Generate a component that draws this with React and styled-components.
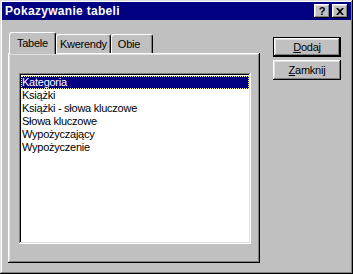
import React, { useState } from "react";
import styled, { createGlobalStyle } from "styled-components";

const GlobalStyle = createGlobalStyle`
  html, body {
    margin: 0;
    padding: 0;
    background: #c0c0c0;
  }
  * {
    box-sizing: border-box;
  }
`;

const Window = styled.div`
  width: 353px;
  height: 274px;
  background: #c0c0c0;
  padding: 2px;
  display: flex;
  flex-direction: column;
  font-family: "Liberation Sans", Arial, sans-serif;
  font-size: 11px;
  letter-spacing: -0.25px;
  color: #000;
  box-shadow: inset -1px -1px #000, inset 1px 1px #dfdfdf,
    inset -2px -2px #808080, inset 2px 2px #fff;
`;

const TitleBar = styled.div`
  height: 18px;
  background: #000080;
  display: flex;
  align-items: center;
  padding: 0 3px 0 3px;
`;

const Title = styled.span`
  flex: 1;
  color: #fff;
  font-weight: bold;
  font-size: 12px;
  letter-spacing: 0.3px;
`;

const TitleButton = styled.button`
  width: 16px;
  height: 14px;
  margin-left: ${(p) => (p.$gap ? "2px" : "0")};
  padding: 0;
  border: none;
  background: #c0c0c0;
  display: flex;
  align-items: center;
  justify-content: center;
  font-family: "Liberation Sans", Arial, sans-serif;
  font-weight: bold;
  font-size: 11px;
  line-height: 1;
  box-shadow: inset -1px -1px #000, inset 1px 1px #fff,
    inset -2px -2px #808080, inset 2px 2px #dfdfdf;
`;

const Body = styled.div`
  flex: 1;
  display: flex;
  padding: 12px 9px 9px 6px;
  gap: 13px;
`;

const TabColumn = styled.div`
  width: 252px;
  display: flex;
  flex-direction: column;
`;

const TabStrip = styled.div`
  display: flex;
  align-items: flex-end;
  height: 21px;
  padding-left: 1px;
  position: relative;
  z-index: 1;
`;

const Tab = styled.div`
  height: ${(p) => (p.$active ? "22px" : "19px")};
  margin-bottom: ${(p) => (p.$active ? "-1px" : "0")};
  padding: 0 ${(p) => p.$pad}px;
  padding-top: ${(p) => (p.$active ? "4px" : "3px")};
  background: #c0c0c0;
  display: flex;
  align-items: flex-start;
  border-top: 1px solid #fff;
  border-left: 1px solid #fff;
  border-right: 1px solid #000;
  border-radius: 3px 3px 0 0;
  box-shadow: inset -1px 0 #808080;
`;

const Panel = styled.div`
  flex: 1;
  background: #c0c0c0;
  padding: 20px 9px 19px 11px;
  display: flex;
  box-shadow: inset -1px -1px #000, inset 1px 1px #fff,
    inset -2px -2px #808080, inset 2px 2px #dfdfdf;
`;

const ListBox = styled.div`
  flex: 1;
  background: #fff;
  padding: 3px 2px 2px 2px;
  box-shadow: inset -1px -1px #fff, inset 1px 1px #808080,
    inset -2px -2px #dfdfdf, inset 2px 2px #000;
`;

const Item = styled.div`
  height: 13px;
  line-height: 12px;
  padding-left: 1px;
  white-space: nowrap;
  background: ${(p) => (p.$selected ? "#000080" : "transparent")};
  color: ${(p) => (p.$selected ? "#fff" : "#000")};
  outline: ${(p) => (p.$selected ? "1px dotted #ffff80" : "none")};
  outline-offset: -1px;
  cursor: default;
`;

const ButtonColumn = styled.div`
  display: flex;
  flex-direction: column;
  gap: 3px;
  padding-top: 5px;
  width: 68px;
`;

const Button = styled.button`
  height: 20px;
  width: 68px;
  padding: 0;
  background: #c0c0c0;
  border: ${(p) => (p.$default ? "1px solid #000" : "none")};
  font-family: "Liberation Sans", Arial, sans-serif;
  font-size: 11px;
  letter-spacing: -0.25px;
  color: #000;
  box-shadow: inset -1px -1px #000, inset 1px 1px #fff,
    inset -2px -2px #808080, inset 2px 2px #dfdfdf;

  u {
    text-decoration: underline;
  }
`;

const tables = [
  "Kategoria",
  "Książki",
  "Książki - słowa kluczowe",
  "Słowa kluczowe",
  "Wypożyczający",
  "Wypożyczenie",
];

const CloseIcon = () => (
  <svg width="8" height="7" viewBox="0 0 8 7">
    <path d="M0 0h2l2 2 2-2h2L5 3.5 8 7H6L4 5 2 7H0l3-3.5z" fill="#000" />
  </svg>
);

export default function App() {
  const [selected, setSelected] = useState(0);

  return (
    <>
      <GlobalStyle />
      <Window>
        <TitleBar>
          <Title>Pokazywanie tabeli</Title>
          <TitleButton>?</TitleButton>
          <TitleButton $gap>
            <CloseIcon />
          </TitleButton>
        </TitleBar>
        <Body>
          <TabColumn>
            <TabStrip>
              <Tab $active $pad={7}>Tabele</Tab>
              <Tab $pad={3}>Kwerendy</Tab>
              <Tab $pad={6}>Obie&nbsp;&nbsp;</Tab>
            </TabStrip>
            <Panel>
              <ListBox>
                {tables.map((t, i) => (
                  <Item
                    key={t}
                    $selected={i === selected}
                    onClick={() => setSelected(i)}
                  >
                    {t}
                  </Item>
                ))}
              </ListBox>
            </Panel>
          </TabColumn>
          <ButtonColumn>
            <Button $default>
              <u>D</u>odaj
            </Button>
            <Button>
              <u>Z</u>amknij
            </Button>
          </ButtonColumn>
        </Body>
      </Window>
    </>
  );
}
